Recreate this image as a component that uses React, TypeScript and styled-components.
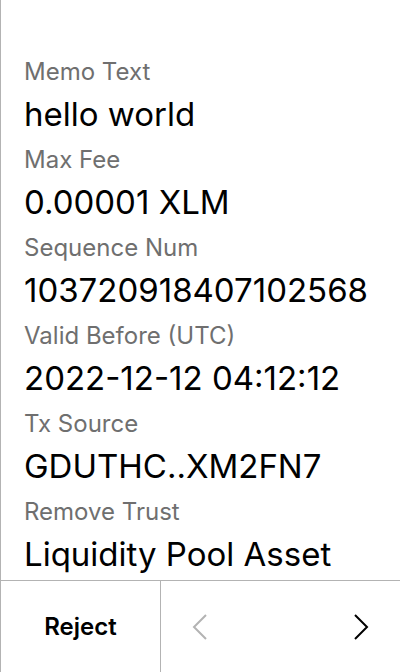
import styled, { createGlobalStyle } from 'styled-components';

const GlobalStyle = createGlobalStyle`
  html, body {
    margin: 0;
    padding: 0;
    background: #ffffff;
  }
  body {
    font-family: Inter, 'Noto Sans', sans-serif;
    color: #000000;
  }
`;

const FIELDS = [
  { label: 'Memo Text', value: 'hello world' },
  { label: 'Max Fee', value: '0.00001 XLM' },
  { label: 'Sequence Num', value: '103720918407102568' },
  { label: 'Valid Before (UTC)', value: '2022-12-12 04:12:12' },
  { label: 'Tx Source', value: 'GDUTHC..XM2FN7' },
  { label: 'Remove Trust', value: 'Liquidity Pool Asset' },
];

const Chevron = ({ dir, disabled }: { dir: 'left' | 'right'; disabled?: boolean }) => (
  <svg width="16" height="26" viewBox="0 0 16 26" fill="none">
    <path
      d={dir === 'left' ? 'M14 1L2 13L14 25' : 'M2 1L14 13L2 25'}
      stroke={disabled ? '#b3b3b3' : '#000000'}
      strokeWidth="2"
    />
  </svg>
);

const App = () => {
  return (
    <Screen>
      <GlobalStyle />
      <Content>
        {FIELDS.map((f) => (
          <Field key={f.label}>
            <Label>{f.label}</Label>
            <Value>{f.value}</Value>
          </Field>
        ))}
      </Content>
      <Footer>
        <RejectButton>Reject</RejectButton>
        <Nav>
          <NavButton disabled>
            <Chevron dir="left" disabled />
          </NavButton>
          <NavButton>
            <Chevron dir="right" />
          </NavButton>
        </Nav>
      </Footer>
    </Screen>
  );
};

export default App;

const Screen = styled.div`
  width: 400px;
  height: 672px;
  box-sizing: border-box;
  border-left: 1px solid #b3b3b3;
  display: flex;
  flex-direction: column;
  overflow: hidden;
`;

const Content = styled.div`
  flex: 1;
  display: flex;
  flex-direction: column;
  gap: 12px;
  padding: 58px 0 0 23px;
  overflow: hidden;
`;

const Field = styled.div`
  display: flex;
  flex-direction: column;
  gap: 8px;
`;

const Label = styled.div`
  font-size: 24px;
  line-height: 28px;
  color: #6f6f6f;
`;

const Value = styled.div`
  font-size: 33px;
  line-height: 40px;
  color: #000000;
  white-space: nowrap;
`;

const Footer = styled.div`
  height: 91px;
  flex-shrink: 0;
  border-top: 1px solid #b3b3b3;
  display: flex;
`;

const RejectButton = styled.button`
  width: 160px;
  border: none;
  border-right: 1px solid #b3b3b3;
  background: none;
  padding: 0;
  font-family: Inter, 'Noto Sans', sans-serif;
  font-size: 24px;
  font-weight: 600;
  color: #000000;
`;

const Nav = styled.div`
  flex: 1;
  display: flex;
  align-items: center;
  justify-content: space-between;
  padding: 0 31px;
`;

const NavButton = styled.button`
  border: none;
  background: none;
  padding: 0;
  display: flex;
  align-items: center;
`;
